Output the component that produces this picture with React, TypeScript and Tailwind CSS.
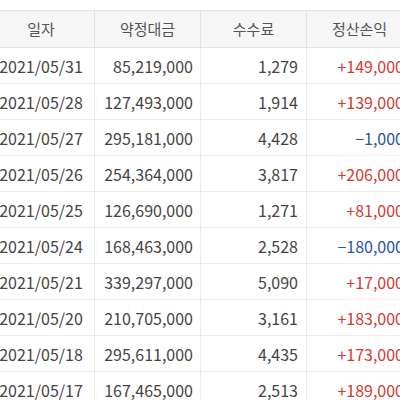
const rows: [string, string, string, string][] = [
  ["2021/05/31", "85,219,000", "1,279", "+149,000"],
  ["2021/05/28", "127,493,000", "1,914", "+139,000"],
  ["2021/05/27", "295,181,000", "4,428", "−1,000"],
  ["2021/05/26", "254,364,000", "3,817", "+206,000"],
  ["2021/05/25", "126,690,000", "1,271", "+81,000"],
  ["2021/05/24", "168,463,000", "2,528", "−180,000"],
  ["2021/05/21", "339,297,000", "5,090", "+17,000"],
  ["2021/05/20", "210,705,000", "3,161", "+183,000"],
  ["2021/05/18", "295,611,000", "4,435", "+173,000"],
  ["2021/05/17", "167,465,000", "2,513", "+189,000"],
];

export default function App() {
  return (
    <div
      className="w-[400px] h-[400px] overflow-hidden bg-white text-[#444]"
      style={{ fontFamily: '"Noto Sans CJK KR", "Noto Sans", sans-serif' }}
    >
      <div className="ml-[-12px] mt-[10px] w-[424px]">
        {/* header */}
        <div className="grid grid-cols-4 h-[38px] bg-[#f6f6f6] border-y border-[#e2e2e2] text-[15px] text-[#555]">
          {["일자", "약정대금", "수수료", "정산손익"].map((h, i) => (
            <div
              key={h}
              className={`flex items-center justify-center ${i > 0 ? "border-l border-[#e2e2e2]" : ""}`}
            >
              {h}
            </div>
          ))}
        </div>

        {rows.map(([date, amount, fee, pnl]) => (
          <div key={date} className="grid grid-cols-4 h-[36px] border-b border-[#ebebeb] text-[16px]">
            <div className="flex items-center justify-center">{date}</div>
            <div className="flex items-center justify-end pr-[7px] border-l border-[#ebebeb]">{amount}</div>
            <div className="flex items-center justify-end pr-[8px] border-l border-[#ebebeb]">{fee}</div>
            <div
              className={`flex items-center justify-end pr-[8px] border-l border-[#ebebeb] ${
                pnl.startsWith("+") ? "text-[#d23a32]" : "text-[#2a56a5]"
              }`}
            >
              {pnl}
            </div>
          </div>
        ))}
      </div>
    </div>
  );
}
